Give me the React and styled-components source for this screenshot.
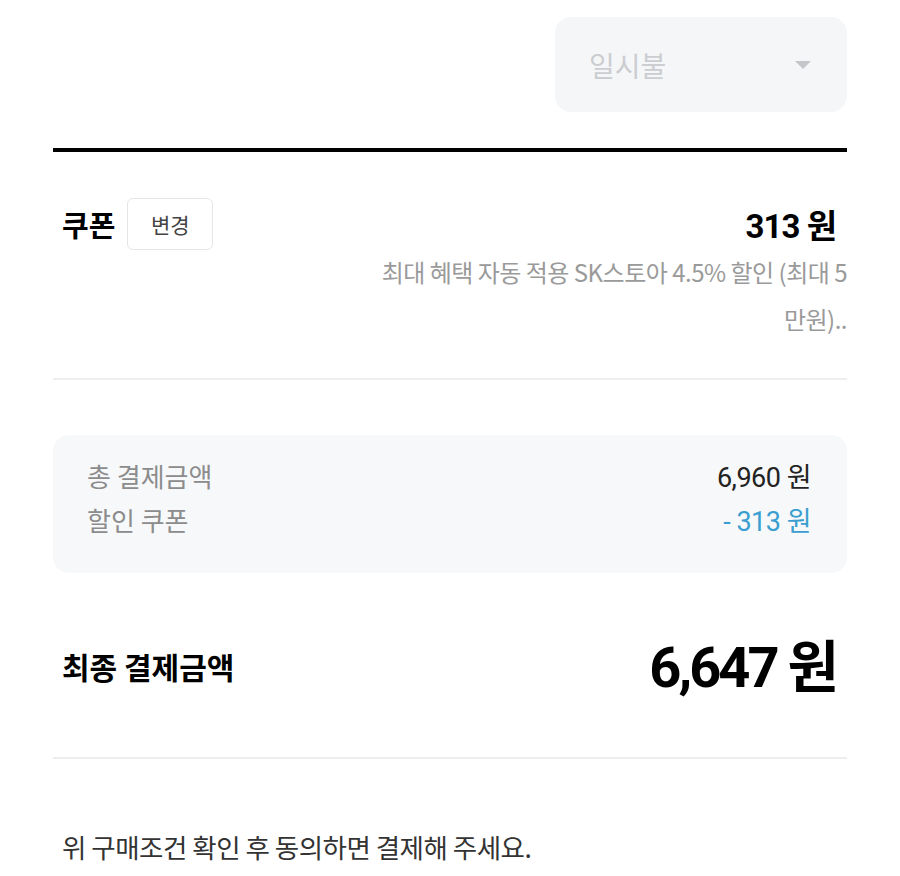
import React from "react";
import styled, { createGlobalStyle } from "styled-components";

const GlobalStyle = createGlobalStyle`
  html, body {
    margin: 0;
    padding: 0;
    background: #ffffff;
  }
  body {
    font-family: "Roboto", "Noto Sans CJK KR", sans-serif;
    color: #111111;
  }
`;

function App() {
  return (
    <>
      <GlobalStyle />
      <Page>
        <InstallmentRow>
          <InstallmentSelect>
            <InstallmentText>일시불</InstallmentText>
            <Caret />
          </InstallmentSelect>
        </InstallmentRow>
        <ThickDivider />

        <CouponSection>
          <CouponHead>
            <CouponLabel>
              쿠폰
              <ChangeButton>변경</ChangeButton>
            </CouponLabel>
            <CouponAmount>
              313 <Won>원</Won>
            </CouponAmount>
          </CouponHead>
          <CouponNote>
            최대 혜택 자동 적용 SK스토아 4.5% 할인 (최대 5 만원)..
          </CouponNote>
        </CouponSection>
        <ThinDivider />

        <SummaryBox>
          <SummaryRow>
            <SummaryLabel>총 결제금액</SummaryLabel>
            <SummaryValue>6,960 원</SummaryValue>
          </SummaryRow>
          <SummaryRow>
            <SummaryLabel>할인 쿠폰</SummaryLabel>
            <SummaryValue discount>- 313 원</SummaryValue>
          </SummaryRow>
        </SummaryBox>

        <FinalRow>
          <FinalLabel>최종 결제금액</FinalLabel>
          <FinalAmount>
            6,647 <Won>원</Won>
          </FinalAmount>
        </FinalRow>
        <ThinDivider />

        <Agreement>위 구매조건 확인 후 동의하면 결제해 주세요.</Agreement>
      </Page>
    </>
  );
}

const Page = styled.div`
  width: 794px;
  margin: 0 auto;
  padding-top: 17px;
  box-sizing: border-box;
`;

const InstallmentRow = styled.div`
  display: flex;
  justify-content: flex-end;
`;

const InstallmentSelect = styled.div`
  width: 292px;
  height: 95px;
  box-sizing: border-box;
  padding: 0 36px 0 34px;
  background: #f5f6f8;
  border-radius: 16px;
  display: flex;
  align-items: center;
  justify-content: space-between;
`;

const InstallmentText = styled.span`
  font-family: "Noto Sans CJK KR", sans-serif;
  font-size: 28px;
  color: #cbcdd1;
`;

const Caret = styled.span`
  width: 0;
  height: 0;
  border-left: 8px solid transparent;
  border-right: 8px solid transparent;
  border-top: 8px solid #c4c6ca;
`;

const ThickDivider = styled.div`
  height: 4px;
  background: #000000;
  margin-top: 36px;
`;

const ThinDivider = styled.div`
  height: 2px;
  background: #eeeeee;
`;

const CouponSection = styled.div`
  padding: 46px 10px 36px 9px;
`;

const CouponHead = styled.div`
  display: flex;
  align-items: center;
  justify-content: space-between;
`;

const CouponLabel = styled.div`
  display: flex;
  align-items: center;
  gap: 12px;
  font-family: "Noto Sans CJK KR", sans-serif;
  font-size: 29px;
  font-weight: 700;
  color: #000000;
`;

const ChangeButton = styled.button`
  width: 86px;
  height: 52px;
  box-sizing: border-box;
  border: 1.5px solid #e6e6e6;
  border-radius: 6px;
  background: #ffffff;
  font-family: "Noto Sans CJK KR", sans-serif;
  font-size: 21px;
  color: #444444;
  padding: 0;
`;

const CouponAmount = styled.div`
  font-size: 33px;
  font-weight: 700;
  letter-spacing: -1px;
  color: #000000;
`;

const Won = styled.span`
  font-family: "Noto Sans CJK KR", sans-serif;
  letter-spacing: 0;
`;

const CouponNote = styled.p`
  margin: -2px -10px 0 auto;
  max-width: 490px;
  text-align: right;
  font-family: "Noto Sans CJK KR", sans-serif;
  font-size: 24px;
  line-height: 47px;
  color: #9a9a9a;
  letter-spacing: -0.5px;
`;

const SummaryBox = styled.div`
  margin-top: 55px;
  padding: 22px 36px 36px 34px;
  background: #f7f8fa;
  border-radius: 16px;
  display: flex;
  flex-direction: column;
  gap: 8px;
`;

const SummaryRow = styled.div`
  display: flex;
  align-items: center;
  justify-content: space-between;
  height: 36px;
`;

const SummaryLabel = styled.span`
  font-family: "Noto Sans CJK KR", sans-serif;
  font-size: 26px;
  color: #8c8c8c;
`;

const SummaryValue = styled.span`
  font-family: "Roboto", "Noto Sans CJK KR", sans-serif;
  font-size: 27px;
  letter-spacing: -0.5px;
  color: ${(p) => (p.discount ? "#3a9fd0" : "#222222")};
`;

const FinalRow = styled.div`
  display: flex;
  align-items: center;
  justify-content: space-between;
  padding: 58px 8px 57px 9px;
`;

const FinalLabel = styled.span`
  font-family: "Noto Sans CJK KR", sans-serif;
  font-size: 30px;
  font-weight: 700;
  color: #000000;
`;

const FinalAmount = styled.span`
  font-size: 56px;
  font-weight: 700;
  letter-spacing: -3px;
  line-height: 64px;
  color: #000000;
`;

const Agreement = styled.p`
  margin: 68px 0 0 9px;
  font-family: "Noto Sans CJK KR", sans-serif;
  font-size: 26.5px;
  color: #333333;
  letter-spacing: -0.5px;
`;

export default App;
